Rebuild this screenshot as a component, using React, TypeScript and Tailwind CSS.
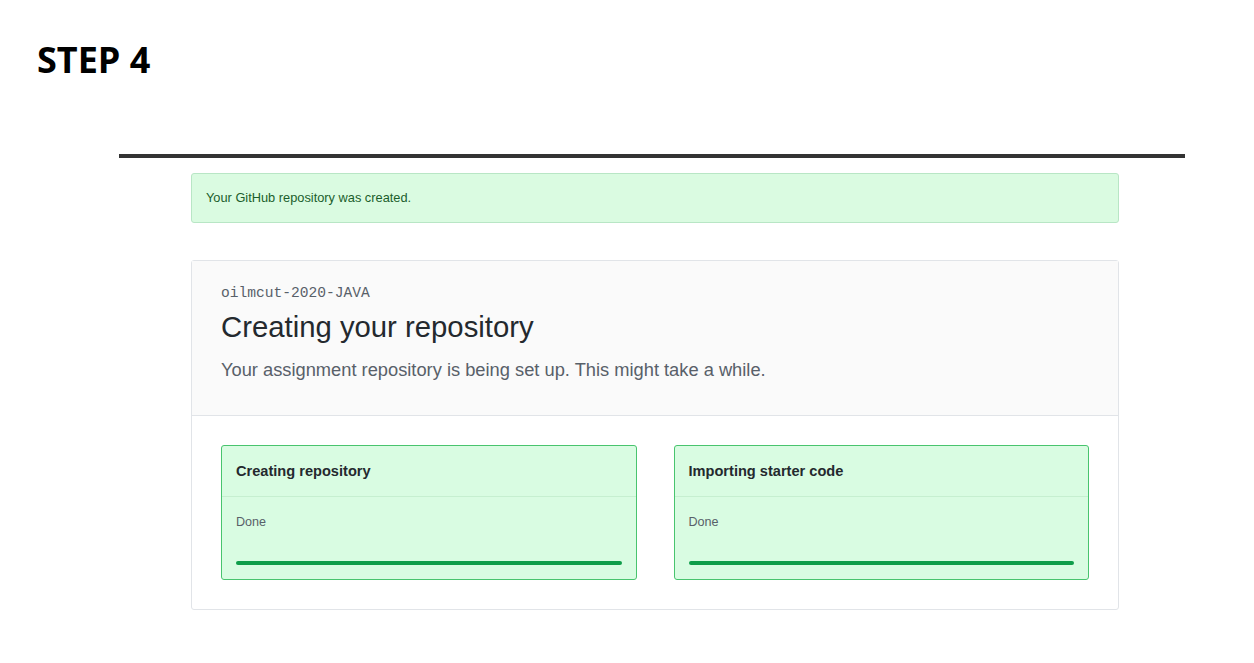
import React from 'react'

const sans = { fontFamily: '"Liberation Sans", Arial, sans-serif' }

function StepCard({ title }: { title: string }) {
  return (
    <div className="flex-1 rounded-[3px] border border-[#48c46e] bg-[#d9fce2]">
      <div className="flex h-[51px] items-center border-b border-[#c6efd0] px-[14px] pt-[2px] text-[14.6px] font-bold text-[#24292e]">
        {title}
      </div>
      <div className="px-[14px] pt-[17px] pb-[14px]">
        <div className="text-[12.6px] leading-[17px] text-[#586069]">Done</div>
        <div className="mt-[30px] h-[4px] w-full rounded-full bg-[#0f9d4a]" />
      </div>
    </div>
  )
}

export default function App() {
  return (
    <div className="min-h-[663px] w-[1254px] bg-white" style={sans}>
      <h1
        className="pl-[37px] pt-[38px] text-[36px] font-bold leading-[44px] text-black"
        style={{ fontFamily: '"Open Sans", "Noto Sans", sans-serif' }}
      >
        STEP 4
      </h1>

      <div className="ml-[119px] mt-[72px] h-[4px] w-[1066px] bg-[#333333]" />

      <div className="ml-[191px] mt-[15px] w-[928px]">
        <div className="flex h-[50px] items-center rounded-[3px] border border-[#b8e6c5] bg-[#dafbe1] px-[14px] text-[12.8px] text-[#1b5e2c]">
          Your GitHub repository was created.
        </div>

        <div className="mt-[37px] rounded-[3px] border border-[#e1e4e8]">
          <div className="h-[155px] border-b border-[#e1e4e8] bg-[#fafafa] px-[29px] pt-[23px]">
            <div
              className="text-[14.6px] leading-[19px] text-[#586069]"
              style={{ fontFamily: '"Liberation Mono", "Courier New", monospace' }}
            >
              oilmcut-2020-JAVA
            </div>
            <div className="mt-[6px] text-[29.3px] leading-[36px] text-[#24292e]">Creating your repository</div>
            <div className="mt-[12px] text-[18.3px] leading-[26px] text-[#586069]">
              Your assignment repository is being set up. This might take a while.
            </div>
          </div>
          <div className="flex gap-[37px] p-[29px]">
            <StepCard title="Creating repository" />
            <StepCard title="Importing starter code" />
          </div>
        </div>
      </div>
    </div>
  )
}
